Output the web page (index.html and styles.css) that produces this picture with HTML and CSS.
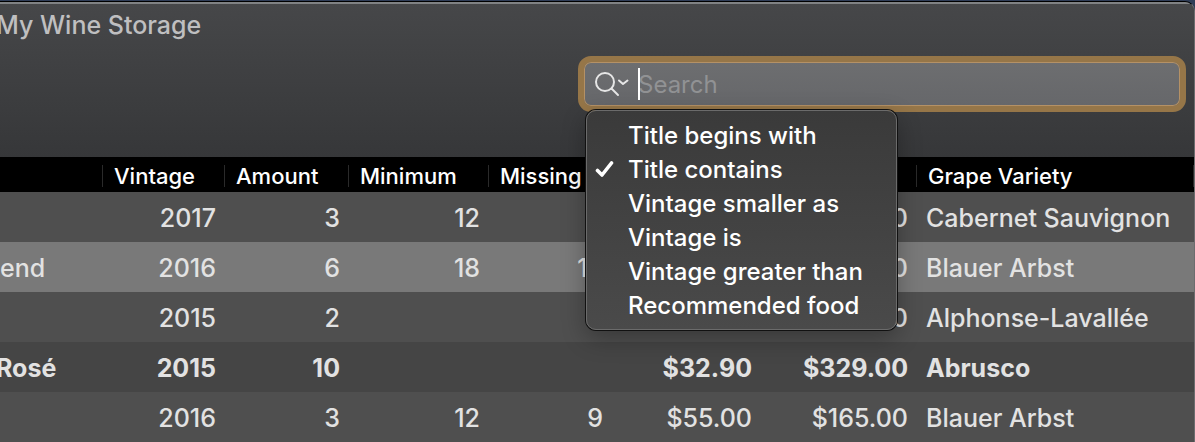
FILE: index.html
```
<!DOCTYPE html>
<html lang="en">
<head>
  <meta charset="UTF-8">
  <title>My Wine Storage</title>
  <link rel="stylesheet" href="styles.css">
</head>
<body>
<div class="window">
  <header class="toolbar">
    <h1 class="title">My Wine Storage</h1>
    <div class="search">
      <div class="field">
        <button class="scope" aria-label="Search options">
          <svg width="36" height="28" viewBox="0 0 36 28" fill="none" stroke="#e6e6e6" stroke-width="2" stroke-linecap="round" stroke-linejoin="round">
            <circle cx="11" cy="12" r="9"/>
            <path d="M17.5 18.5L24 25"/>
            <path d="M25 10.5L29 14L33.5 10.5"/>
          </svg>
        </button>
        <div class="entry">
          <input class="input" type="text" placeholder="Search" aria-label="Search">
          <span class="caret"></span>
        </div>
      </div>
      <div class="menu" role="menu">
        <button class="option" role="menuitemradio">Title begins with</button>
        <button class="option" role="menuitemradio" aria-checked="true">
          <svg class="check" width="20" height="20" viewBox="0 0 20 20" fill="none" stroke="#fff" stroke-width="3.6" stroke-linecap="round" stroke-linejoin="round">
            <path d="M2.5 11.5L7 16L16.5 4"/>
          </svg>
          Title contains
        </button>
        <button class="option" role="menuitemradio">Vintage smaller as</button>
        <button class="option" role="menuitemradio">Vintage is</button>
        <button class="option" role="menuitemradio">Vintage greater than</button>
        <button class="option" role="menuitemradio">Recommended food</button>
      </div>
    </div>
  </header>
  <table class="wines">
    <colgroup>
      <col class="col-name">
      <col class="col-vintage">
      <col class="col-amount">
      <col class="col-minimum">
      <col class="col-missing">
      <col class="col-price">
      <col class="col-value">
      <col>
    </colgroup>
    <thead>
      <tr>
        <th><span></span></th>
        <th><span>Vintage</span></th>
        <th><span>Amount</span></th>
        <th><span>Minimum</span></th>
        <th><span>Missing</span></th>
        <th><span></span></th>
        <th><span></span></th>
        <th><span>Grape Variety</span></th>
      </tr>
    </thead>
    <tbody>
      <tr><td></td><td>2017</td><td>3</td><td>12</td><td></td><td></td><td>0</td><td>Cabernet Sauvignon</td></tr>
      <tr class="selected"><td>end</td><td>2016</td><td>6</td><td>18</td><td>12</td><td></td><td>0</td><td>Blauer Arbst</td></tr>
      <tr><td></td><td>2015</td><td>2</td><td></td><td></td><td></td><td>0</td><td>Alphonse-Lavallée</td></tr>
      <tr class="strong"><td>Rosé</td><td>2015</td><td>10</td><td></td><td></td><td>$32.90</td><td>$329.00</td><td>Abrusco</td></tr>
      <tr><td></td><td>2016</td><td>3</td><td>12</td><td>9</td><td>$55.00</td><td>$165.00</td><td>Blauer Arbst</td></tr>
    </tbody>
  </table>
</div>
</body>
</html>
```
FILE: styles.css
```
* {
    box-sizing: border-box;
}

body {
    margin: 0;
    padding-top: 1px;
    overflow: hidden;

    background: #2f3d57;
    color: #e2e2e2;
    font-family: Inter, "Liberation Sans", sans-serif;
    font-size: 25px;
}

button, input {
    margin: 0;
    padding: 0;
    border: 0;
    outline: 0;

    background: none;
    color: inherit;
    font: inherit;
}

.window {
    border-top: 1px solid #000;
    border-right: 1px solid #6c6c6e;
    border-radius: 0 10px 0 0;
    overflow: hidden;

    background: #4f4f4f;
}

.toolbar {
    height: 156px;
    padding: 5px 8px 0 0;
    border-top: 2px solid #808284;
    border-bottom: 1px solid #000;

    display: flex;
    flex-direction: column;
    gap: 15px;

    background: linear-gradient(#464749, #363739);
}

.title {
    height: 32px;
    margin: 0;

    color: #bfbfc0;
    font-size: 25px;
    font-weight: 500;
    line-height: 32px;
    text-indent: -4px;
}

.search {
    width: 608px;
    margin-left: auto;
    position: relative;
}

.field {
    height: 56px;
    padding: 0 10px;
    border: 6px solid #967648;
    border-radius: 13px;
    box-shadow: inset 0 0 0 1px #b49166;

    display: flex;
    align-items: center;

    background: linear-gradient(#6d6e70, #66676a);
}

.scope {
    width: 44px;
    height: 28px;
}

.scope svg {
    display: block;
}

.entry {
    flex: 1;
    display: flex;
    align-items: center;

    position: relative;
}

.input {
    width: 100%;
    height: 32px;

    color: #fff;
    font-size: 24px;
}

.input::placeholder {
    color: #919294;
    opacity: 1;
}

.caret {
    width: 2px;
    height: 32px;

    position: absolute;
    top: 0;
    left: 0;

    background: #fff;
}

.menu {
    width: 311px;
    padding: 7px 0;
    border: 1px solid #6b6b6b;
    border-radius: 10px;
    box-shadow: 0 0 0 1px #111, 0 8px 24px rgba(0, 0, 0, 0.3);

    position: absolute;
    top: 54px;
    left: 8px;
    z-index: 1;

    background: linear-gradient(#3a3a3a, #4a4a4a);
}

.option {
    width: 100%;
    height: 34px;
    padding-left: 41px;

    display: flex;
    align-items: center;

    position: relative;

    color: #fff;
    font-size: 24px;
    font-weight: 500;
    white-space: nowrap;
}

.check {
    position: absolute;
    left: 8px;
}

.wines {
    width: 100%;

    border-collapse: collapse;
    table-layout: fixed;
}

.col-name {
    width: 103px;
}

.col-vintage {
    width: 122px;
}

.col-amount {
    width: 124px;
}

.col-minimum {
    width: 140px;
}

.col-missing {
    width: 123px;
}

.col-price {
    width: 149px;
}

.col-value {
    width: 156px;
}

.wines th {
    height: 34px;
    padding: 2px 0 0;

    background: #000;
    color: #fff;
    font-size: 22px;
    font-weight: 500;
    text-align: left;
    white-space: nowrap;
}

.wines th span {
    height: 22px;
    padding-left: 11px;
    border-right: 1px solid #2a2a2a;

    display: block;

    line-height: 22px;
}

.wines td {
    height: 50px;
    padding: 2px 9px 0 0;

    font-weight: 500;
    text-align: right;
    white-space: nowrap;
}

.wines td:first-child {
    padding: 2px 0 0;

    text-align: left;
}

.wines td:last-child {
    padding: 2px 0 0 9px;

    text-align: left;
}

.wines .selected {
    background: #797979;
}

.wines .strong {
    background: #454545;
}

.wines .strong td {
    font-weight: 700;
}

.wines .strong td:first-child {
    text-indent: -4px;
}
```
